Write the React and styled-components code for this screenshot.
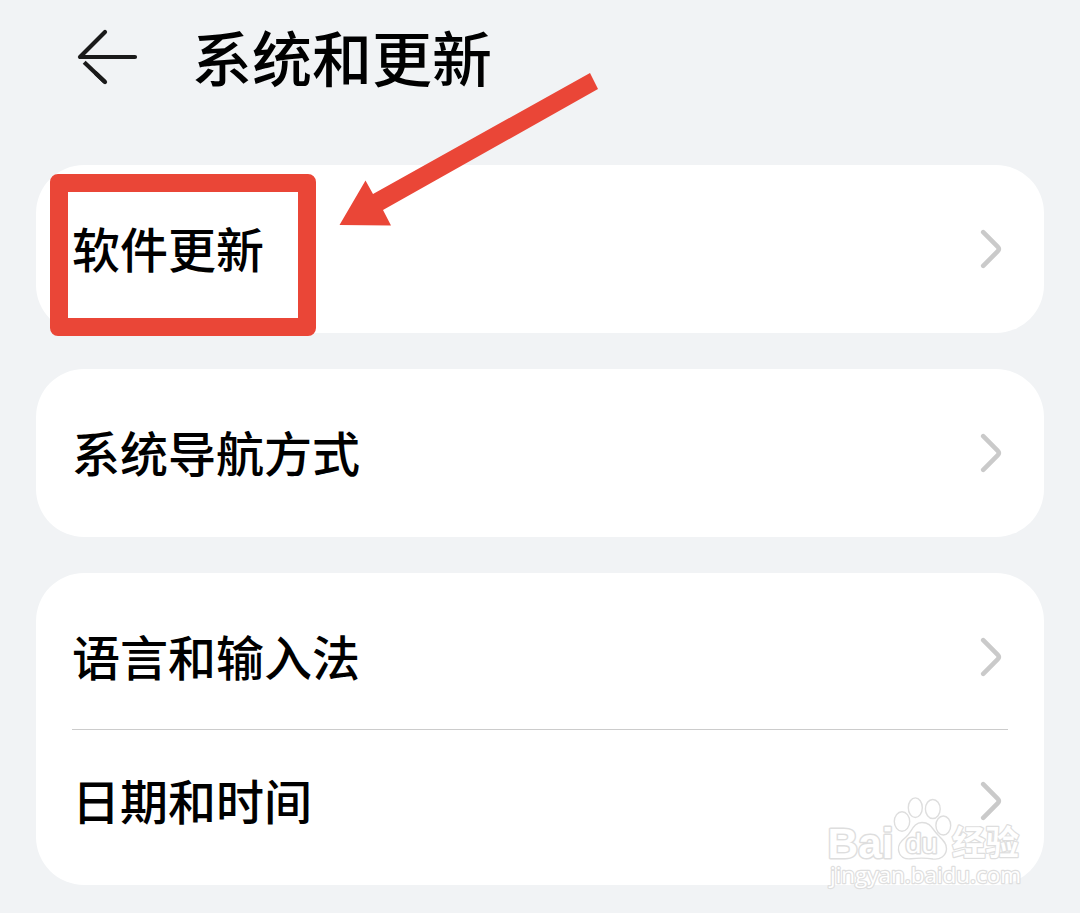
import React from 'react';
import styled, { createGlobalStyle } from 'styled-components';

const colors = {
    page: '#f1f3f5',
    card: '#ffffff',
    text: '#000000',
    icon: '#1a1a1a',
    chevron: '#cacaca',
    divider: '#cccccc',
    marker: '#ea4637',
    watermark: '#dedede',
};

const groups = [
    ['软件更新'],
    ['系统导航方式'],
    ['语言和输入法', '日期和时间'],
];

const BackIcon = () => (
    <svg width="62" height="58" viewBox="0 0 62 58" fill="none" stroke={colors.icon} strokeWidth="4.2" strokeLinecap="round" strokeLinejoin="round">
        <path d="M29 4 L4 29 H59" />
        <path d="M8.2 34.2 L29 54" strokeLinecap="butt" />
        <path d="M20 45.5 L29 54" />
    </svg>
);

const Chevron = () => (
    <svg width="22" height="40" viewBox="0 0 22 40" fill="none" stroke={colors.chevron} strokeWidth="4.6" strokeLinecap="round">
        <path d="M3.2 3.2 L17.6 17.6 Q20 20 17.6 22.4 L3.2 36.8" />
    </svg>
);

const Pointer = () => (
    <svg width="262" height="156" viewBox="0 0 262 156">
        <polygon fill={colors.marker} points="252,3 260,19 45,140 53,155.5 1.5,155 27.5,110.5 35,124" />
    </svg>
);

const Watermark = () => (
    <svg width="200" height="96" viewBox="0 0 200 96" fill="#ffffff" stroke={colors.watermark} strokeWidth="1.4" strokeLinejoin="round">
        <BrandText x="2.5" y="62.5" fontSize="43" textLength="66" lengthAdjust="spacingAndGlyphs">Bai</BrandText>
        <ellipse cx="77" cy="26.5" rx="7.7" ry="9.8" />
        <ellipse cx="90.3" cy="12.7" rx="7" ry="9.8" />
        <ellipse cx="107.8" cy="14" rx="7.4" ry="9.5" />
        <ellipse cx="118.3" cy="30.5" rx="7.4" ry="9.5" />
        <path d="M97 27.5 C88 27.5 87 37 81 42 C75 47 73 50 73.5 55 C74.5 62 80 64.5 86 63.8 C92 63 102 63 108 64 C115 65 121 61 121.5 54 C122 48 117 44 113 40 C107 34 106 27.5 97 27.5 Z" />
        <PawText x="80.5" y="58" fontSize="28" textLength="32" lengthAdjust="spacingAndGlyphs">du</PawText>
        <ChineseText x="127" y="60" fontSize="34" textLength="67" lengthAdjust="spacingAndGlyphs">经验</ChineseText>
        <UrlText x="5" y="87.5" fontSize="22" textLength="191" lengthAdjust="spacingAndGlyphs">jingyan.baidu.com</UrlText>
    </svg>
);

const App = () => {
    return (
        <Screen>
            <GlobalStyle />
            <Header>
                <BackIcon />
                <Title>系统和更新</Title>
            </Header>
            <List>
                {groups.map((items) => (
                    <Card key={items[0]}>
                        {items.map((label, index) => (
                            <Row key={label} $divided={index > 0}>
                                <Label>{label}</Label>
                                <Chevron />
                            </Row>
                        ))}
                    </Card>
                ))}
            </List>
            <Highlight />
            <PointerWrapper>
                <Pointer />
            </PointerWrapper>
            <WatermarkWrapper>
                <Watermark />
            </WatermarkWrapper>
        </Screen>
    );
};

export default App;

// Styling
const GlobalStyle = createGlobalStyle`
    * {
        box-sizing: border-box;
    }

    body {
        margin: 0;
        background: ${colors.page};
        font-family: "Noto Sans CJK SC", sans-serif;
    }

    svg {
        display: block;
        flex-shrink: 0;
    }
`;

const Screen = styled.div`
    position: relative;
    width: 1080px;
    height: 913px;
    overflow: hidden;
    background: ${colors.page};
`;

const Header = styled.header`
    display: flex;
    align-items: center;
    gap: 54px;
    height: 165px;
    padding: 0 76px 51px;
`;

const Title = styled.h1`
    margin: -2px 0 0;
    font-size: 60px;
    line-height: 80px;
    font-weight: 500;
    color: ${colors.text};
`;

const List = styled.main`
    display: flex;
    flex-direction: column;
    gap: 36px;
    padding: 0 36px;
`;

const Card = styled.section`
    padding: 12px 36px;
    border-radius: 48px;
    background: ${colors.card};
`;

const Row = styled.div`
    display: flex;
    align-items: center;
    justify-content: space-between;
    height: 144px;
    padding-right: 6px;
    box-shadow: ${({ $divided }) => ($divided ? `inset 0 1px 0 ${colors.divider}` : 'none')};
`;

const Label = styled.span`
    margin-top: -4px;
    font-size: 48px;
    line-height: 64px;
    font-weight: 500;
    color: ${colors.text};
`;

const Highlight = styled.div`
    position: absolute;
    top: 174px;
    left: 50px;
    width: 266px;
    height: 162px;
    border: 18px solid ${colors.marker};
    border-radius: 8px;
`;

const PointerWrapper = styled.div`
    position: absolute;
    top: 70px;
    left: 338px;
`;

const WatermarkWrapper = styled.div`
    position: absolute;
    top: 795px;
    left: 825px;
`;

const BrandText = styled.text`
    font-family: "Liberation Sans", sans-serif;
    font-weight: 700;
    stroke-width: 3px;
    paint-order: stroke;
`;

const PawText = styled.text`
    font-family: "Liberation Sans", sans-serif;
    font-weight: 400;
    stroke-width: 3px;
    paint-order: stroke;
`;

const ChineseText = styled.text`
    font-family: "Noto Sans CJK SC", sans-serif;
    font-weight: 700;
    stroke-width: 2.4px;
    paint-order: stroke;
`;

const UrlText = styled.text`
    font-family: "Open Sans", sans-serif;
    stroke-width: 2.4px;
    paint-order: stroke;
`;
